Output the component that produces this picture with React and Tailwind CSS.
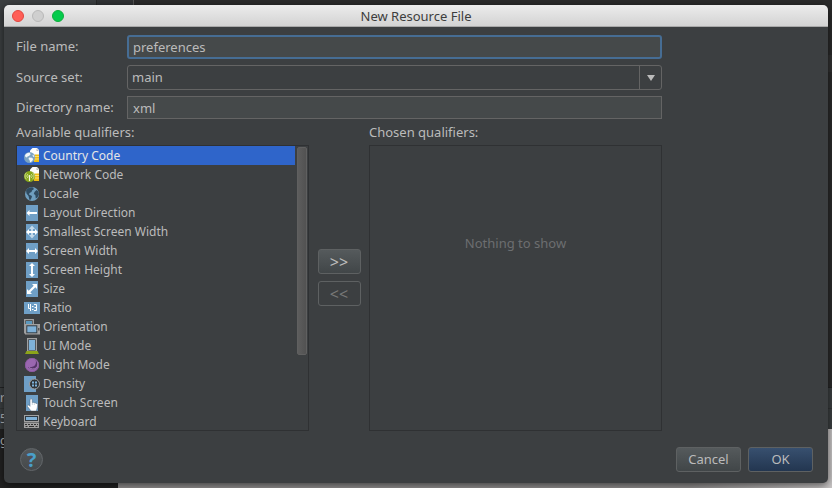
import React, { useState } from "react";

const Svg = ({ children }) => (
  <svg width="16" height="16" viewBox="0 0 16 16" className="shrink-0" aria-hidden="true">
    {children}
  </svg>
);

const Page = () => (
  <>
    <path d="M8.500 0H13l2 2v11H6V2.500z" fill="#fdfdfb" />
    <path d="M12.500 0.500L15 3h-2.500z" fill="#bdbdbd" />
    <path d="M10.500 6.500H15V14h-5z" fill="#efbd12" />
    <path d="M11 8.500h4M11 11h4" stroke="#fff0a0" strokeWidth="0.700" />
  </>
);

const Tile = () => <path d="M2 0h12v16H2z" fill="#6f9fc6" />;

const icons = {
  country: (
    <Svg>
      <Page />
      <circle cx="5.500" cy="9.500" r="5.500" fill="#7ba3c3" />
      <path d="M1 7.500c1-2.300 3-3 5-2.500l.500 1.500L5 8 3.500 8.500 3 9.500 1.500 9zM5 9.500l3 .200 1.200 1.300-1 2-2 1.500-.700-2.500L4.500 11zM9 6.500l1.500 2-1 .500-1-1.300z" fill="#f1f6fa" />
    </Svg>
  ),
  network: (
    <Svg>
      <Page />
      <circle cx="5.500" cy="9.500" r="5.500" fill="#86a61a" />
      <circle cx="5.500" cy="9" r="1" fill="#f4f9dc" />
      <path d="M5.500 9v5" stroke="#f4f9dc" strokeWidth="1.200" />
      <path d="M3.800 11a2.700 2.700 0 0 1 0-4M7.200 11a2.700 2.700 0 0 0 0-4M2.400 12.300a4.500 4.500 0 0 1 0-6.600M8.600 12.300a4.500 4.500 0 0 0 0-6.600" stroke="#dbe8a8" strokeWidth="0.800" fill="none" />
    </Svg>
  ),
  locale: (
    <Svg>
      <circle cx="8" cy="8" r="7" fill="#6f9fc0" />
      <path d="M2 4.500C3.500 2 6 1 8.500 1.200L10 3 8 4.500 7.500 6 5.500 7 5 8.500 8 10l-.500 2-1.500 2.500C5 13 5 11.500 4.500 10L2.500 7.500zM10.500 6l2-2 1.700 1.200.8 3-1.500 3.300-1.700 1-.500-3.500-1.500-1z" fill="#304b60" />
    </Svg>
  ),
  direction: (
    <Svg>
      <Tile />
      <path d="M2.500 8l3-3v2H13v2H5.500v2z" fill="#fff" />
    </Svg>
  ),
  smallest: (
    <Svg>
      <Tile />
      <path d="M8 1.500L11 5H9v6h2l-3 3.500L5 11h2V5H5z" fill="#c4d9e9" />
      <path d="M2 8l3-3v2h6V5l3 3-3 3V9H5v2z" fill="#fff" />
    </Svg>
  ),
  width: (
    <Svg>
      <Tile />
      <path d="M2 8l3-3v2h6V5l3 3-3 3V9H5v2z" fill="#fff" />
    </Svg>
  ),
  height: (
    <Svg>
      <Tile />
      <path d="M8 1l3 3H9v8h2l-3 3-3-3h2V4H5z" fill="#fff" />
    </Svg>
  ),
  size: (
    <Svg>
      <Tile />
      <path d="M13 3v5l-1.700-1.700-5 5L8 13H3V8l1.700 1.700 5-5L8 3z" fill="#fff" />
    </Svg>
  ),
  ratio: (
    <Svg>
      <path d="M0 2h16v12H0z" fill="#6f9fc6" />
      <path d="M4.500 4v4.500H7M6.500 4v7M8 6.500h1.500M8 9.500h1.500M10 4.500h2.500v6H10M10.500 7.500h2" stroke="#fff" fill="none" />
    </Svg>
  ),
  orientation: (
    <Svg>
      <path d="M0.700 14.500V.700h8.600V5" stroke="#a1a1a1" strokeWidth="1.300" fill="none" />
      <path d="M2 2h6v3H2z" fill="#5b98bd" />
      <path d="M1 5h15v10.500H1z" fill="#a1a1a1" />
      <path d="M2.300 6.300h11v8h-11z" fill="#323c43" />
      <path d="M3.300 7.300h9v6h-9z" fill="#7eb1d8" />
      <path d="M14.300 9h1v2.500h-1z" fill="#333" />
    </Svg>
  ),
  uimode: (
    <Svg>
      <path d="M3 0h10v13H3z" fill="#a1a1a1" />
      <path d="M4.300 1.300h7.400v11.200H4.300z" fill="#303a42" />
      <path d="M5 2h6v10H5z" fill="#7eb1d8" />
      <path d="M2.500 13h11l1.500 3H1z" fill="#8ca41a" />
    </Svg>
  ),
  night: (
    <Svg>
      <circle cx="8" cy="8" r="7" fill="#9a67b0" />
      <path d="M11.500 2.500c1.800 5-1.500 8.500-7.500 7.500 1.500 3 6.500 3.500 9 .500 2-2.500 1.500-6-1.500-8z" fill="#56336a" />
      <path d="M12.500 3.500c2 3 1.500 6-.500 7.500-2 1.500-5 1.200-7-.500" stroke="#c7a0d8" strokeWidth="0.700" fill="none" />
      <circle cx="8" cy="8" r="6.600" fill="none" stroke="#8a579f" strokeWidth="0.800" />
    </Svg>
  ),
  density: (
    <Svg>
      <path d="M0 0h12v16H0z" fill="#6f9fc6" />
      <circle cx="10.500" cy="8" r="5" fill="#2e3336" stroke="#a1a1a1" strokeWidth="1" />
      <path d="M8 5.500h2v2H8zM11 5.500h2v2h-2zM8 8.500h2v2H8zM11 8.500h2v2h-2z" fill="#7eb1d8" />
    </Svg>
  ),
  touch: (
    <Svg>
      <Tile />
      <path d="M6 5c0-1.600 2.300-1.600 2.300 0v2.700c.8-.7 1.700-.4 2 .2.800-.4 1.500 0 1.800.6.900-.3 1.600.2 1.600 1.200 0 2.500-.7 4-1.400 6.300H7L3.500 11.500c-.7-1.200.6-2 1.500-1.200l1 1z" fill="#fff" stroke="#49637a" strokeWidth="0.500" />
      <path d="M8.300 8v2M10.300 8.500V10" stroke="#9ab" strokeWidth="0.500" />
    </Svg>
  ),
  keyboard: (
    <Svg>
      <path d="M0 1h15v7H0zM0 8.500h15V14H0z" fill="#a1a1a1" />
      <path d="M1 2h13v5H1z" fill="#303a42" />
      <path d="M2 3h11v3H2z" fill="#7eb1d8" />
      <path d="M1 10.500h13" stroke="#333" strokeDasharray="2 1" />
      <path d="M1.500 12.500h2M5 12.500h5M11.500 12.500h2" stroke="#333" />
    </Svg>
  ),
};

const qualifiers = [
  ["country", "Country Code"],
  ["network", "Network Code"],
  ["locale", "Locale"],
  ["direction", "Layout Direction"],
  ["smallest", "Smallest Screen Width"],
  ["width", "Screen Width"],
  ["height", "Screen Height"],
  ["size", "Size"],
  ["ratio", "Ratio"],
  ["orientation", "Orientation"],
  ["uimode", "UI Mode"],
  ["night", "Night Mode"],
  ["density", "Density"],
  ["touch", "Touch Screen"],
  ["keyboard", "Keyboard"],
];

function Editor() {
  return (
    <div aria-hidden="true" className="col-start-1 row-start-1 flex flex-col overflow-hidden bg-[#2b2b2b]">
      <div className="flex h-[387px]">
        <div className="w-24 bg-[#3c3f41]" />
        <div className="w-[38px] border-x border-r-[#555555] border-l-[#282828] bg-[#313335]" />
        <div className="flex-1" />
        <div className="mt-[55px] h-[17px] w-1 bg-[#323232]" />
      </div>
      <div className="h-[21px] border-t border-[#232425] bg-[#3c3f41] text-xs leading-5">r</div>
      <div className="h-[21px] border-t border-[#333536] bg-[#3c3f41] text-xs leading-5">5</div>
      <div className="flex flex-1">
        <div className="w-[118px] bg-[#222222] text-xs leading-6">g</div>
        <div className="flex-1 bg-linear-to-r from-[#929090] from-80% to-[#c9c6c6]" />
      </div>
    </div>
  );
}

function TitleBar() {
  return (
    <header className="grid h-[22px] grid-cols-[1fr_auto_1fr] items-center rounded-t-[5px] border-b border-[#a9a9a9] bg-linear-to-b from-[#ececec] to-[#d3d3d3] px-2">
      <div className="flex gap-2">
        <button aria-label="Close" className="size-3 rounded-full border border-[#e2463f] bg-[#ff5f57]" />
        <button aria-label="Minimize" disabled className="size-3 rounded-full border border-[#b9b9b9] bg-[#cfcfcf]" />
        <button aria-label="Zoom" className="size-3 rounded-full border border-[#0eae3c] bg-[#05cb4c]" />
      </div>
      <h1 className="text-[13px] leading-4 text-[#3d3d3d]">New Resource File</h1>
    </header>
  );
}

const buttonBase = "h-[25px] rounded-[3px] border border-[#5e6162]";

export default function App() {
  const [selected, setSelected] = useState("country");
  const [fileName, setFileName] = useState("preferences");
  const [directory, setDirectory] = useState("xml");

  return (
    <div className="grid min-h-screen font-['Noto_Sans','Open_Sans',sans-serif] text-[13px] text-[#bbbbbb]">
      <Editor />
      <main className="col-start-1 row-start-1 mx-1 mt-[5px] mb-[5px] flex flex-col rounded-[5px] bg-[#3c3f41] shadow-[0_2px_8px_rgba(0,0,0,0.6)]">
        <TitleBar />
        <form className="flex flex-1 flex-col pt-2" onSubmit={(e) => e.preventDefault()}>
          <div className="flex flex-col pr-[166px] pl-3">
            <div className="grid grid-cols-[111px_1fr] items-center gap-y-[6px]">
              <label htmlFor="file-name">File name:</label>
              <input
                id="file-name"
                value={fileName}
                onChange={(e) => setFileName(e.target.value)}
                className="h-6 w-full rounded-[3px] border-2 border-[#466d94] bg-[#45494a] px-1 outline-none"
              />
              <label htmlFor="source-set">Source set:</label>
              <div className="flex h-[25px] rounded-[3px] border border-[#646464]">
                <select id="source-set" className="flex-1 appearance-none bg-transparent px-1 outline-none">
                  <option>main</option>
                </select>
                <span className="flex w-[22px] items-center justify-center border-l border-[#646464]">
                  <svg width="8" height="6" viewBox="0 0 8 6" aria-hidden="true">
                    <path d="M0 0h8L4 6z" fill="#bbbbbb" />
                  </svg>
                </span>
              </div>
              <label htmlFor="directory">Directory name:</label>
              <input
                id="directory"
                value={directory}
                onChange={(e) => setDirectory(e.target.value)}
                className="h-[23px] w-full border border-[#646464] bg-[#45494a] px-[5px] outline-none"
              />
            </div>

            <div className="mt-1 grid grid-cols-[1fr_60px_1fr]">
              <h2 id="available" className="h-[22px] leading-[18px]">Available qualifiers:</h2>
              <span />
              <h2 className="h-[22px] leading-[18px]">Chosen qualifiers:</h2>

              <div className="flex h-[286px] overflow-hidden border border-[#2f3133]">
                <ul aria-labelledby="available" className="flex-1 text-xs">
                  {qualifiers.map(([id, name]) => (
                    <li key={id}>
                      <button
                        type="button"
                        onClick={() => setSelected(id)}
                        className={`flex h-[19px] w-full items-center gap-[3px] pl-[7px] ${
                          selected === id ? "bg-[#2f65ca] text-[#e6e6e6]" : ""
                        }`}
                      >
                        {icons[id]}
                        {name}
                      </button>
                    </li>
                  ))}
                </ul>
                <div className="w-[13px] pt-px pr-px pl-[2px]">
                  <div className="h-[208px] rounded-[2px] border border-[#606060] bg-linear-to-r from-[#5d5d5d] to-[#525252]" />
                </div>
              </div>
              <div className="flex flex-col items-center gap-[7px] pt-[104px]">
                <button type="button" aria-label="Add qualifier" className={`${buttonBase} w-[43px] bg-linear-to-b from-[#555a5c] to-[#414648] text-base leading-5`}>
                  &gt;&gt;
                </button>
                <button type="button" aria-label="Remove qualifier" disabled className={`${buttonBase} w-[43px] text-base leading-5 text-[#777777]`}>
                  &lt;&lt;
                </button>
              </div>
              <div className="border border-[#2f3133] pt-[88px] text-center leading-[18px] text-[#6c6e70]">
                Nothing to show
              </div>
            </div>
          </div>

          <footer className="mt-auto mb-[11px] flex items-center gap-[7px] pr-[15px] pl-4">
            <button
              type="button"
              aria-label="Help"
              className="mr-auto size-[23px] rounded-full border border-[#63676a] bg-linear-to-b from-[#54585a] to-[#45494b] text-xl leading-5 font-bold text-[#4a9fc9]"
            >
              ?
            </button>
            <button type="button" className={`${buttonBase} w-[65px] bg-linear-to-b from-[#555a5c] to-[#414648]`}>
              Cancel
            </button>
            <button type="submit" className={`${buttonBase} w-[65px] bg-linear-to-b from-[#38506f] to-[#233650]`}>
              OK
            </button>
          </footer>
        </form>
      </main>
    </div>
  );
}
